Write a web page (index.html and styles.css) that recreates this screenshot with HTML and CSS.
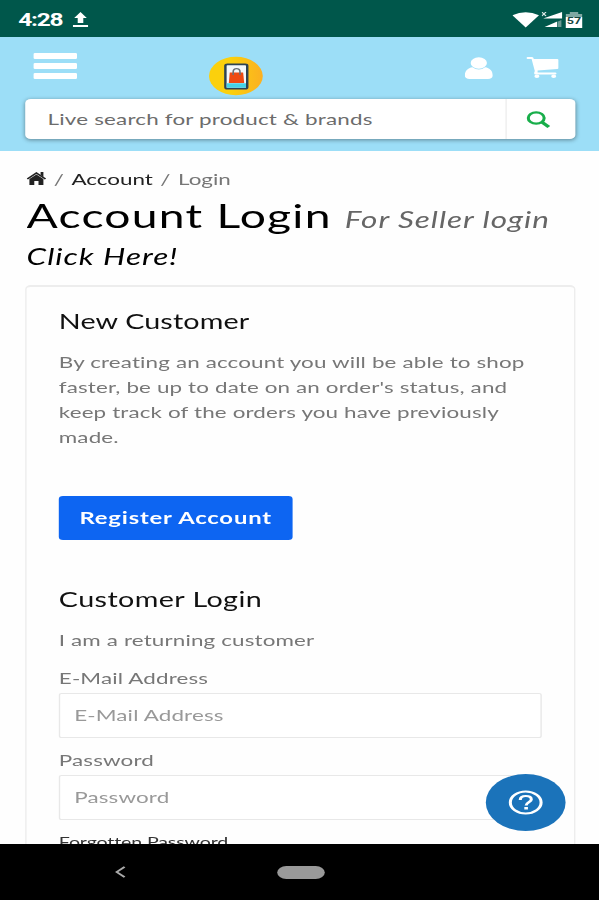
FILE: index.html
```html
<!DOCTYPE html>
<html lang="en">
<head>
    <meta charset="UTF-8">
    <meta name="viewport" content="width=device-width, initial-scale=1.0">
    <title>Account Login</title>
    <link rel="stylesheet" href="styles.css">
</head>
<body>

    <div class="screen">
        <div class="status-bar">
            <span class="time">4:28</span>
            <svg class="upload" width="11" height="16" viewBox="0 0 11 16" fill="#fff"><path d="M5.5 0 10 6H7.5v5h-4V6H1zM0 13h11v2H0z"/></svg>
            <div class="status-icons">
                <svg width="19" height="16" viewBox="0 0 19 16" fill="#fff"><path d="M0 3.200Q9.500-2.800 19 3.200L9.500 15.500z"/></svg>
                <svg width="15" height="16" viewBox="0 0 15 16"><path d="M1 6.500 14.500 0v6.500zM2 15l9-5.500V15z" fill="#fff"/><path d="M11.500 9.500 14 8v7h-2.500z" fill="#6b9a93"/><path d="m0 0 3 4m0-4-3 4" stroke="#dbe8e6" fill="none"/></svg>
                <svg width="12" height="16" viewBox="0 0 12 16"><path d="M3 0h6v2h3v14H0V2h3z" fill="#7fa8a2"/><path d="M0 5h12v11H0z" fill="#fff"/><text x="6" y="12" text-anchor="middle" font-size="9" font-weight="bold" fill="#16463f">57</text></svg>
            </div>
        </div>

        <div class="header">
            <div class="header-top">
                <div class="menu"><i></i><i></i><i></i></div>
                <svg class="logo" width="39" height="40" viewBox="0 0 40 40">
                    <defs><linearGradient id="sun"><stop offset="0.400" stop-color="#fbd00c"/><stop offset="1" stop-color="#fbb022"/></linearGradient></defs>
                    <circle cx="20" cy="20" r="19.700" fill="url(#sun)"/>
                    <rect x="12.300" y="8" width="16" height="25" rx="1.500" fill="#f4f8fb" stroke="#2c4354" stroke-width="1.800"/>
                    <path d="M13.200 27.500h14.200V32H13.200z" fill="#45d3e6"/>
                    <path d="M15.500 16.500h9.800l.8 10.800H14.800z" fill="#ee4a12"/>
                    <path d="M18 19v-3q0-3.500 2.500-3.500T23 16v3" fill="none" stroke="#6c7278" stroke-width="1.200"/>
                </svg>
                <div class="header-icons">
                    <svg width="20" height="22" viewBox="0 0 20 22" fill="#fff"><path d="M5.500 10.200C2.200 10.700 0 14 0 18.500 0 20.800 1.400 22 3.500 22h13c2.100 0 3.500-1.200 3.500-3.500 0-4.500-2.200-7.800-5.500-8.300Q12.500 12.600 10 12.600t-4.500-2.400z"/><circle cx="10" cy="6" r="5.800"/></svg>
                    <svg width="23" height="21" viewBox="0 0 23 21" fill="#fff"><path d="M0 1q0-1 1-1h3q1 0 1.300 2H22q1 0 1 1v8q0 1-1 1L8 13.500v2h12.500q1 0 1 1t-1 1H6.500q-1 0-1-1.500L6 14 3.700 2H1Q0 2 0 1z"/><circle cx="7.500" cy="19.200" r="1.800"/><circle cx="19.500" cy="19.200" r="1.800"/></svg>
                </div>
            </div>
            <div class="search">
                <input type="text" placeholder="Live search for product &amp; brands">
                <button>
                    <svg width="17" height="17" viewBox="0 0 17 17" fill="none" stroke="#18ae4a"><circle cx="7" cy="7" r="5.700" stroke-width="2.200"/><path d="m11 11 5 5" stroke-width="2.800"/></svg>
                </button>
            </div>
        </div>

        <div class="page">
            <div class="breadcrumb">
                <svg width="14" height="13" viewBox="0 0 14 13"><path d="M7 2.600 12 7v6H8.500V9h-3v4H2V7z" fill="#222"/><path d="M.5 7 7 1l6.500 6" fill="none" stroke="#222" stroke-width="1.400"/><path d="M10 0h2v5l-2-2z" fill="#222"/></svg>
                <span class="sep">/</span><a class="crumb">Account</a><span class="sep">/</span><span class="current">Login</span>
            </div>
            <h1>Account Login <em>For Seller login <a>Click Here!</a></em></h1>

            <div class="card">
                <h2>New Customer</h2>
                <p>By creating an account you will be able to shop<br>faster, be up to date on an order's status, and<br>keep track of the orders you have previously<br>made.</p>
                <button class="register">Register Account</button>

                <h2 class="login-title">Customer Login</h2>
                <p class="returning">I am a returning customer</p>
                <div class="form-group">
                    <label for="email">E-Mail Address</label>
                    <input type="text" id="email" placeholder="E-Mail Address">
                </div>
                <div class="form-group">
                    <label for="password">Password</label>
                    <input type="password" id="password" placeholder="Password">
                </div>
                <a class="forgotten">Forgotten Password</a>
            </div>
        </div>

        <div class="help">
            <svg width="25" height="25" viewBox="0 0 25 25" fill="none" stroke="#fff"><circle cx="12.500" cy="12.500" r="11" stroke-width="2.200"/><path d="M8.600 10q0-4 4-4t3.900 3.500c0 2.500-3.700 2.700-3.700 6" stroke-width="2.200"/><path d="M11.500 17h2.600v2.500h-2.600z" fill="#fff" stroke="none"/></svg>
        </div>

        <div class="nav-bar">
            <svg width="8" height="12" viewBox="0 0 8 12" fill="none" stroke="#aaa" stroke-width="1.700"><path d="M7 .8 1.400 6 7 11.200"/></svg>
            <div class="pill"></div>
        </div>
    </div>

</body>
</html>
```
FILE: styles.css
```css
body {
    margin: 0;
    width: 599px;
    height: 900px;
    overflow: hidden;
    background-color: #fefefe;
    font-family: Lato, sans-serif;
}

/* phone screen, widened to fill the window */
.screen {
    position: relative;
    width: 428px;
    height: 900px;
    overflow: hidden;
    display: flex;
    flex-direction: column;
    transform: scaleX(1.4);
    transform-origin: 0 0;
    font-size: 16px;
    letter-spacing: 0.1px;
    color: #777;
}

svg {
    display: block;
    flex: none;
}

.status-bar {
    flex: none;
    height: 37px;
    box-sizing: border-box;
    padding: 2px 12px 0 13px;
    background-color: #00574b;
    color: #fff;
    display: flex;
    align-items: center;
}

.time {
    width: 32px;
    font-family: Roboto, sans-serif;
    font-size: 17.500px;
    font-weight: 700;
    line-height: 20px;
    letter-spacing: -0.9px;
}

.upload {
    margin-left: 7px;
}

.status-icons {
    display: flex;
    gap: 2px;
    margin-left: auto;
    font-family: Roboto, sans-serif;
    letter-spacing: 0;
}

.header {
    flex: none;
    height: 114px;
    background-color: #9cdef7;
}

.header-top {
    height: 62px;
    box-sizing: border-box;
    padding: 16px 29px 0 24px;
    display: flex;
    align-items: flex-start;
}

.menu {
    width: 31px;
    display: flex;
    flex-direction: column;
    gap: 4px;
}

.menu i {
    height: 6px;
    border-radius: 1px;
    background-color: #fff;
}

.logo {
    margin: 3px 0 0 94px;
}

.header-icons {
    display: flex;
    gap: 24px;
    margin: 4px 0 0 auto;
}

.search {
    width: 393px;
    height: 40px;
    margin-left: 18px;
    display: flex;
    background-color: #fff;
    border-radius: 4px;
    box-shadow: 0 1px 4px rgba(0, 0, 0, 0.4);
}

.search input {
    flex: 1;
    padding: 0 0 2px 16px;
    border: none;
    background: none;
    font: inherit;
    letter-spacing: 0.13px;
    outline: none;
}

.search input::placeholder {
    color: #6c6c6c;
}

.search button {
    width: 50px;
    padding: 1px 0 0 14px;
    border: none;
    border-left: 1px solid #eee;
    background: none;
}

.page {
    flex: 1;
    min-height: 0;
    overflow: hidden;
    padding: 0 17px 0 18px;
}

.breadcrumb {
    display: flex;
    align-items: center;
    height: 26px;
    margin: 14px 0 0 1px;
    letter-spacing: 0;
}

.sep {
    width: 18px;
    text-align: center;
}

.crumb {
    color: #222;
}

h1 {
    margin: 5px 0 0 1px;
    font-size: 33px;
    font-weight: 400;
    line-height: 39px;
    letter-spacing: 0.9px;
    color: #000;
}

h1 em {
    font-size: 22.500px;
    letter-spacing: 0.7px;
    color: #666;
}

h1 em a {
    display: block;
    line-height: 36px;
    color: #000;
}

.card {
    height: 620px;
    margin-top: 10px;
    padding: 22px 23px 0;
    border: 1px solid #ededed;
    border-top-width: 2px;
    border-radius: 4px;
}

h2 {
    margin: 0;
    font-size: 20.500px;
    font-weight: 400;
    line-height: 24px;
    color: #111;
}

.login-title {
    letter-spacing: 0.3px;
}

p {
    margin: 16px 0 0;
    line-height: 25px;
    white-space: nowrap;
}

.register {
    display: block;
    width: 167px;
    height: 44px;
    margin: 47px 0 47px;
    padding-bottom: 3px;
    border: none;
    border-radius: 3px;
    background-color: #0d65f2;
    color: #fff;
    font: 700 17px Lato, sans-serif;
    letter-spacing: 0.6px;
}

.card .returning {
    margin-top: 16px;
}

.form-group {
    margin-top: 13px;
}

.form-group + .form-group {
    margin-top: 9px;
}

.form-group label {
    display: block;
    line-height: 25px;
    margin-bottom: 3px;
}

.form-group input {
    display: block;
    width: 345px;
    height: 45px;
    box-sizing: border-box;
    padding: 0 10px 2px;
    border: 1px solid #e8e8e8;
    border-radius: 2px;
    background-color: #fff;
    font: inherit;
    letter-spacing: inherit;
}

.form-group input::placeholder {
    color: #999;
}

.forgotten {
    display: block;
    margin-top: 9px;
    font-size: 14px;
    line-height: 25px;
    letter-spacing: -0.1px;
    color: #333;
}

.help {
    position: absolute;
    left: 346.500px;
    top: 773.500px;
    width: 57px;
    height: 57px;
    border-radius: 50%;
    background-color: #1b73ba;
    display: flex;
    align-items: center;
    justify-content: center;
}

.nav-bar {
    flex: none;
    height: 56px;
    background-color: #000;
    display: flex;
    align-items: center;
    padding-left: 81.500px;
}

.pill {
    width: 34px;
    height: 13px;
    margin-left: 108px;
    border-radius: 7px;
    background-color: #999;
}
```
